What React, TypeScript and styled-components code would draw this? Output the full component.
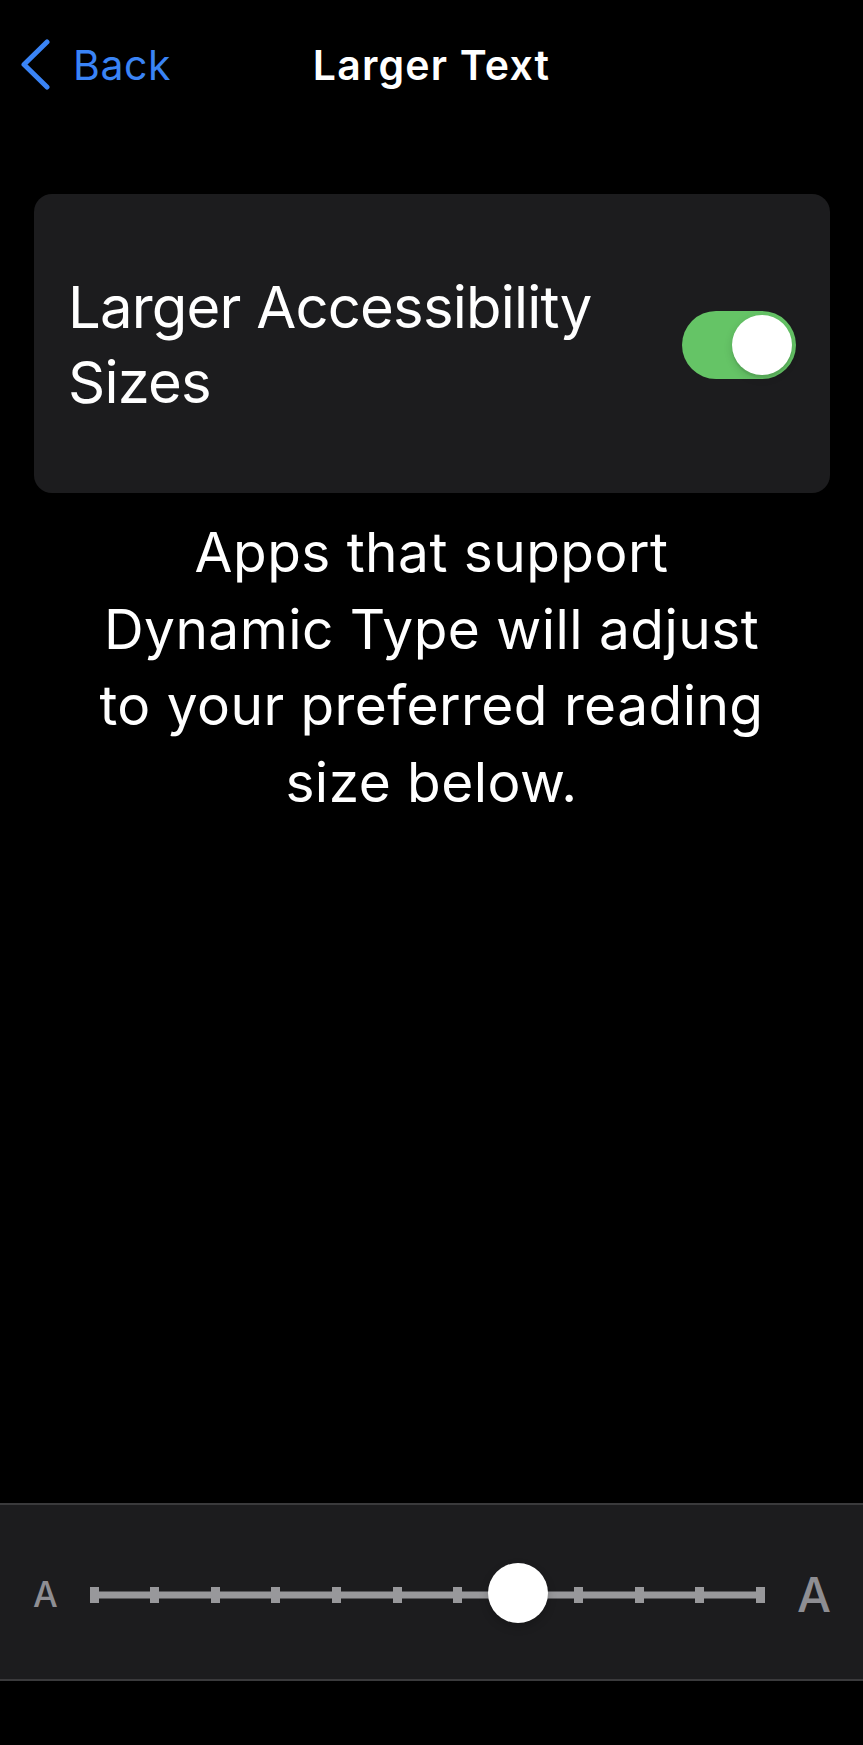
import React from "react";
import styled, { createGlobalStyle } from "styled-components";

const Global = createGlobalStyle`
  html, body { margin: 0; padding: 0; background: #000; }
  body { font-family: Inter, "Noto Sans", sans-serif; -webkit-font-smoothing: antialiased; }
`;

const Page = styled.div`
  width: 863px;
  min-height: 1745px;
  background: #000;
  color: #fff;
  display: flex;
  flex-direction: column;
`;

const NavBar = styled.header`
  display: grid;
  grid-template-columns: 1fr auto 1fr;
  align-items: center;
  padding: 39px 20px 0 20px;
  height: 48px;
`;

const BackButton = styled.button`
  display: flex;
  align-items: center;
  gap: 22px;
  background: none;
  border: none;
  padding: 0;
  color: #3a84f6;
  font-family: Inter, sans-serif;
  font-size: 41px;
  line-height: 48px;
  font-weight: 400;
  letter-spacing: 0.6px;
  justify-self: start;
  cursor: pointer;
`;

const Title = styled.h1`
  margin: 0;
  font-size: 41px;
  line-height: 48px;
  font-weight: 600;
  color: #fff;
  letter-spacing: 1.2px;
`;

const Card = styled.section`
  margin: 107px 33px 0 34px;
  min-height: 299px;
  background: #1c1c1e;
  border-radius: 18px;
  display: flex;
  align-items: center;
  gap: 24px;
  padding: 3px 34px 0 34px;
  box-sizing: border-box;
`;

const CardLabel = styled.div`
  flex: 1;
  font-size: 58px;
  line-height: 75px;
  font-weight: 400;
  letter-spacing: -0.8px;
`;

const Toggle = styled.div<{ $on: boolean }>`
  position: relative;
  flex: none;
  width: 114px;
  height: 68px;
  border-radius: 34px;
  background: ${(p) => (p.$on ? "#65c466" : "#39393d")};
`;

const Knob = styled.div<{ $on: boolean }>`
  position: absolute;
  top: 4px;
  left: ${(p) => (p.$on ? "50px" : "4px")};
  width: 60px;
  height: 60px;
  border-radius: 50%;
  background: #fff;
  box-shadow: 0 3px 8px rgba(0, 0, 0, 0.15), 0 3px 1px rgba(0, 0, 0, 0.06);
`;

const Description = styled.p`
  margin: 21px 0 0 0;
  text-align: center;
  font-size: 55px;
  line-height: 76.5px;
  font-weight: 400;
  letter-spacing: 0.45px;
`;

const Spacer = styled.div`
  flex: 1;
`;

const SliderPanel = styled.section`
  background: #1c1c1e;
  border-top: 2px solid #3a3a3c;
  border-bottom: 2px solid #3a3a3c;
  height: 174px;
  box-sizing: content-box;
  display: flex;
  align-items: center;
  padding: 0 32px 0 33px;
  margin-bottom: 64px;
`;

const SliderRow = styled.div`
  flex: 1;
  display: flex;
  align-items: center;
  gap: 32px;
  padding-top: 5px;
`;

const SizeGlyph = styled.span<{ $size: number }>`
  font-family: Inter, sans-serif;
  font-weight: 500;
  font-size: ${(p) => p.$size}px;
  line-height: 1;
  color: #8e8e93;
`;

const Track = styled.div`
  position: relative;
  flex: 1;
  height: 16px;
  display: flex;
  justify-content: space-between;
  align-items: center;
  &::before {
    content: "";
    position: absolute;
    left: 0;
    right: 0;
    top: 50%;
    height: 7px;
    transform: translateY(-50%);
    background: #98989b;
  }
`;

const Tick = styled.span`
  position: relative;
  width: 9px;
  height: 16px;
  background: #98989b;
`;

const Thumb = styled.div`
  position: absolute;
  top: 50%;
  width: 60px;
  height: 60px;
  margin-left: -30px;
  margin-top: -32px;
  border-radius: 50%;
  background: #fff;
  box-shadow: 0 4px 10px rgba(0, 0, 0, 0.2);
`;

const Chevron = () => (
  <svg width="31" height="51" viewBox="0 0 31 51" fill="none">
    <polyline
      points="27,3 4,25.5 27,48"
      stroke="#3a84f6"
      strokeWidth="5"
      strokeLinecap="round"
      strokeLinejoin="round"
    />
  </svg>
);

const TICKS = 12;
const VALUE = 7;

export default function App() {
  const frac = VALUE / (TICKS - 1);
  return (
    <Page>
      <Global />
      <NavBar>
        <BackButton>
          <Chevron />
          Back
        </BackButton>
        <Title>Larger Text</Title>
        <div />
      </NavBar>
      <Card>
        <CardLabel>Larger Accessibility Sizes</CardLabel>
        <Toggle $on>
          <Knob $on />
        </Toggle>
      </Card>
      <Description>
        Apps that support
        <br />
        Dynamic Type will adjust
        <br />
        to your preferred reading
        <br />
        size below.
      </Description>
      <Spacer />
      <SliderPanel>
        <SliderRow>
          <SizeGlyph $size={35}>A</SizeGlyph>
          <Track>
            {Array.from({ length: TICKS }).map((_, i) => (
              <Tick key={i} />
            ))}
            <Thumb style={{ left: `calc(4.5px + (100% - 9px) * ${frac})` }} />
          </Track>
          <SizeGlyph $size={48}>A</SizeGlyph>
        </SliderRow>
      </SliderPanel>
    </Page>
  );
}
